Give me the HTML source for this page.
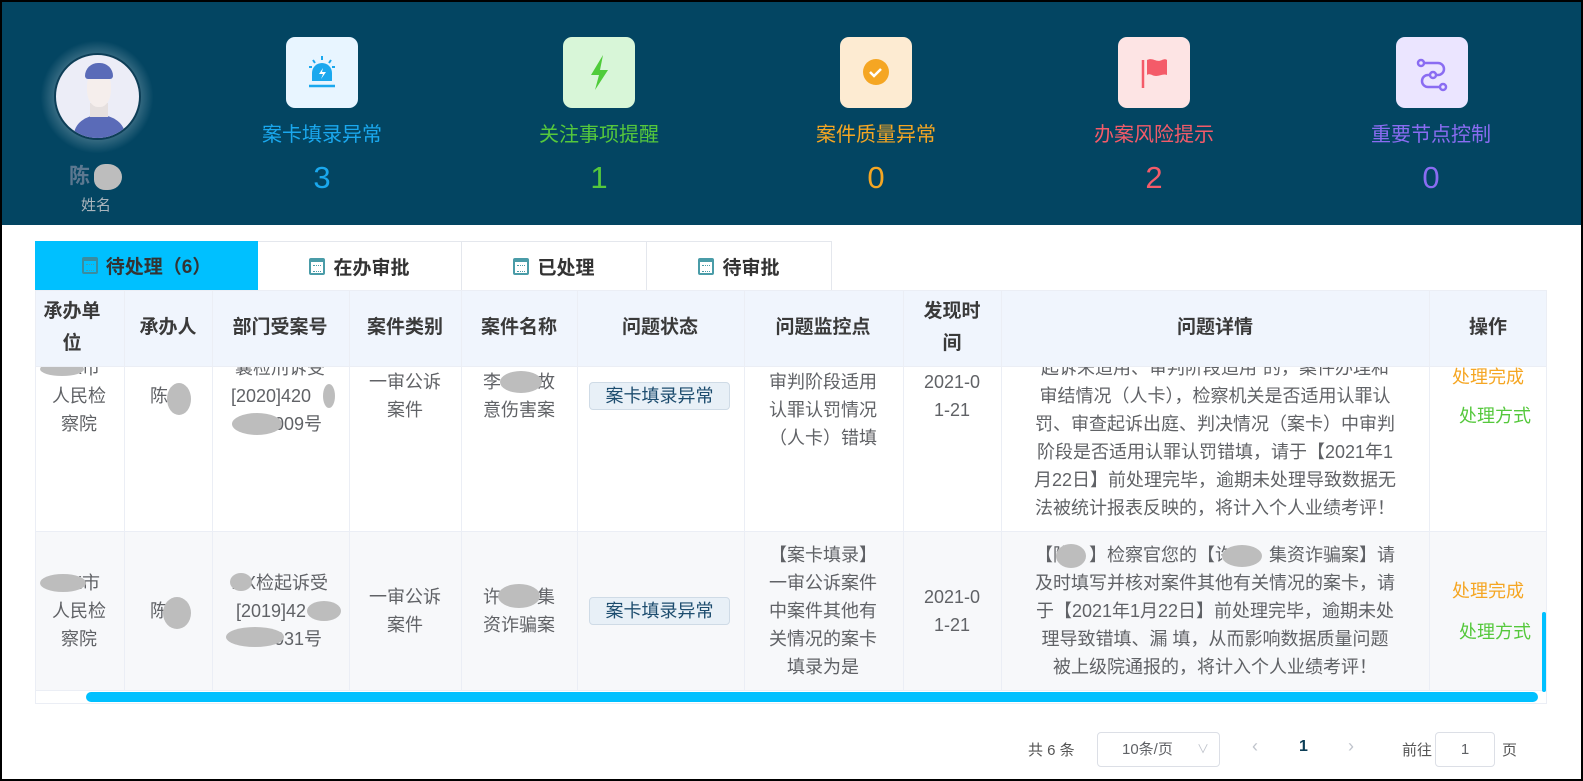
<!DOCTYPE html>
<html><head><meta charset="utf-8">
<style>
*{margin:0;padding:0;box-sizing:border-box}
html,body{width:1583px;height:781px;overflow:hidden}
body{background:#fff;font-family:"Liberation Sans","Noto Sans CJK SC",sans-serif;position:relative}
.frame{position:absolute;left:0;top:0;width:1583px;height:781px;border:2px solid #000;z-index:50;pointer-events:none}
.hdr{position:absolute;left:0;top:0;width:1583px;height:225px;background:#034562}
.ibox{position:absolute;top:37px;width:72px;height:71px;border-radius:9px}
.lab{position:absolute;top:121px;font-size:20px;line-height:28px;transform:translateX(-50%);white-space:nowrap}
.num{position:absolute;top:158px;font-size:31px;line-height:40px;transform:translateX(-50%)}
.t{position:absolute;transform:translateX(-50%);white-space:nowrap;font-size:18px;line-height:28px;color:#606266}
.h{position:absolute;transform:translateX(-50%);white-space:nowrap;font-size:19px;line-height:32px;color:#3a3a3a;font-weight:bold;text-align:center}
.vl{position:absolute;width:1px;background:#ebeef5}
.blob{position:absolute;background:#bdbdbd;border-radius:50%}
.tab{position:absolute;top:241px;height:49px;font-size:19px;font-weight:bold;color:#333;display:flex;align-items:center;justify-content:center;gap:8px;border-right:1px solid #e4e7ed;border-top:1px solid #e4e7ed}
.cal{width:16px;height:17px;border:2px solid #4a9ca8;border-top-width:4px;border-radius:2px;position:relative}
.cal:after{content:"";position:absolute;left:2px;top:3px;width:8px;height:5px;border-top:1px dotted #4a9ca8;border-bottom:1px dotted #4a9ca8}
</style></head><body>
<div class="frame"></div>
<div class="hdr">
  <div style="position:absolute;left:40px;top:40px;width:114px;height:114px;border-radius:50%;background:radial-gradient(circle,rgba(255,255,255,.35) 40%,rgba(255,255,255,0) 70%)"></div>
  <div style="position:absolute;left:54px;top:53px;width:87px;height:87px;border-radius:50%;background:#ecedf7;border:2px solid #0d3e57;overflow:hidden">
    <div style="position:absolute;left:18px;top:60px;width:51px;height:40px;border-radius:50% 50% 0 0;background:#5a6bb8"></div>
    <div style="position:absolute;left:34px;top:48px;width:18px;height:14px;background:#e6e0df"></div>
    <div style="position:absolute;left:31px;top:14px;width:24px;height:38px;border-radius:45%;background:#f5eeec"></div>
    <div style="position:absolute;left:29px;top:8px;width:28px;height:16px;border-radius:13px 13px 3px 3px;background:#5a6bb8"></div>
  </div>
  <div style="position:absolute;left:69px;top:160px;font-size:21px;font-weight:bold;color:#5c7890">陈</div>
  <div class="blob" style="left:94px;top:164px;width:28px;height:26px;border-radius:40% 50% 50% 40%"></div>
  <div style="position:absolute;left:81px;top:194px;font-size:15px;color:#a9b4bc">姓名</div>

  <div class="ibox" style="left:286px;background:#e8f5ff">
    <svg width="72" height="71" viewBox="0 0 72 71"><path d="M26 44v-8a10 10 0 0 1 20 0v8z" fill="#1aa8ee"/><path d="M37 31l-4 6h4l-2 5 5-7h-4z" fill="#fff"/><path d="M23 49h26" stroke="#1aa8ee" stroke-width="2.5"/><path d="M36 19v4M27 23l2 3M45 23l-2 3M23 30h3M46 30h3" stroke="#1aa8ee" stroke-width="2"/></svg></div>
  <div class="ibox" style="left:563px;background:#d8f6d8">
    <svg width="72" height="71" viewBox="0 0 72 71"><path d="M40 18l-12 20h8l-4 15 13-20h-8z" fill="#4fcc3a"/></svg></div>
  <div class="ibox" style="left:840px;background:#fdebd2">
    <svg width="72" height="71" viewBox="0 0 72 71"><circle cx="36" cy="35" r="13" fill="#f5a623"/><path d="M30 35l4 4 7-7" stroke="#fff" stroke-width="2.5" fill="none"/></svg></div>
  <div class="ibox" style="left:1118px;background:#fde4e4">
    <svg width="72" height="71" viewBox="0 0 72 71"><path d="M25 23v28" stroke="#f45b69" stroke-width="2.5"/><path d="M29 23c6-3 9 3 15 0 2-1 4-1 5 0v15c-5-2-9 3-15 0-2-1-4-1-5 0z" fill="#f45b69"/></svg></div>
  <div class="ibox" style="left:1396px;background:#ebe5ff">
    <svg width="72" height="71" viewBox="0 0 72 71"><g stroke="#8a6cf2" stroke-width="2.5" fill="none"><path d="M28 26h14a6 6 0 0 1 0 12H32a6 6 0 0 0 0 12h12"/><circle cx="25" cy="26" r="3" fill="#ebe5ff"/><circle cx="37" cy="38" r="3" fill="#ebe5ff"/><circle cx="47" cy="50" r="3" fill="#ebe5ff"/></g></svg></div>

  <div class="lab" style="left:322px;color:#1aa8ee">案卡填录异常</div><div class="num" style="left:322px;color:#1aa8ee">3</div>
  <div class="lab" style="left:599px;color:#55c83c">关注事项提醒</div><div class="num" style="left:599px;color:#55c83c">1</div>
  <div class="lab" style="left:876px;color:#f5a623">案件质量异常</div><div class="num" style="left:876px;color:#f5a623">0</div>
  <div class="lab" style="left:1154px;color:#f45b69">办案风险提示</div><div class="num" style="left:1154px;color:#f45b69">2</div>
  <div class="lab" style="left:1431px;color:#8a6cf2">重要节点控制</div><div class="num" style="left:1431px;color:#8a6cf2">0</div>
</div>

<div class="tab" style="left:35px;width:223px;background:#00c0ff;border:none"><span class="cal" style="border-color:#3a8ca0"></span>待处理（6）</div>
<div class="tab" style="left:258px;width:204px"><span class="cal"></span>在办审批</div>
<div class="tab" style="left:462px;width:185px"><span class="cal"></span>已处理</div>
<div class="tab" style="left:647px;width:185px"><span class="cal"></span>待审批</div>

<div style="position:absolute;left:35px;top:290px;width:1512px;height:414px;border:1px solid #ebeef5;overflow:hidden">
  <div style="position:absolute;left:0;top:0;width:1510px;height:76px;background:#f0f5fd;z-index:2;border-bottom:1px solid #ebeef5"></div>
  <div style="position:absolute;left:0;top:240px;width:1510px;height:160px;background:#f7f8fa;border-top:1px solid #ebeef5;border-bottom:1px solid #ebeef5"></div>
</div>
<div class="vl" style="left:124px;top:290px;height:400px"></div>
<div class="vl" style="left:212px;top:290px;height:400px"></div>
<div class="vl" style="left:349px;top:290px;height:400px"></div>
<div class="vl" style="left:461px;top:290px;height:400px"></div>
<div class="vl" style="left:577px;top:290px;height:400px"></div>
<div class="vl" style="left:744px;top:290px;height:400px"></div>
<div class="vl" style="left:903px;top:290px;height:400px"></div>
<div class="vl" style="left:1001px;top:290px;height:400px"></div>
<div class="vl" style="left:1429px;top:290px;height:400px"></div>

<div style="position:absolute;left:0;top:366px;width:1583px;height:325px;overflow:hidden">
 <div style="position:absolute;left:0;top:-366px;width:1583px;height:700px">
  <div class="t" style="left:79px;top:354px">XX市</div>
  <div class="t" style="left:79px;top:382px">人民检</div>
  <div class="t" style="left:79px;top:410px">察院</div>
  <div class="t" style="left:168px;top:382px">陈　</div>
  <div class="t" style="left:280px;top:354px">襄检刑诉受</div>
  <div class="t" style="left:280px;top:382px">[2020]420　</div>
  <div class="t" style="left:280px;top:410px">　　009号</div>
  <div class="t" style="left:405px;top:368px">一审公诉</div>
  <div class="t" style="left:405px;top:396px">案件</div>
  <div class="t" style="left:519px;top:368px">李　　故</div>
  <div class="t" style="left:519px;top:396px">意伤害案</div>
  <div class="t" style="left:823px;top:340px">一审公诉案件</div>
  <div class="t" style="left:823px;top:368px">审判阶段适用</div>
  <div class="t" style="left:823px;top:396px">认罪认罚情况</div>
  <div class="t" style="left:823px;top:424px">（人卡）错填</div>
  <div class="t" style="left:952px;top:368px">2021-0</div>
  <div class="t" style="left:952px;top:396px">1-21</div>
  <div class="t" style="left:1215px;top:354px">起诉未适用、审判阶段适用”的，案件办理和</div>
  <div class="t" style="left:1215px;top:382px">审结情况（人卡），检察机关是否适用认罪认</div>
  <div class="t" style="left:1215px;top:410px">罚、审查起诉出庭、判决情况（案卡）中审判</div>
  <div class="t" style="left:1215px;top:438px">阶段是否适用认罪认罚错填，请于【2021年1</div>
  <div class="t" style="left:1215px;top:466px">月22日】前处理完毕，逾期未处理导致数据无</div>
  <div class="t" style="left:1215px;top:494px">法被统计报表反映的，将计入个人业绩考评！</div>
  <div class="t" style="left:1488px;top:363px;color:#f5a623">处理完成</div>
  <div class="t" style="left:1495px;top:402px;color:#55c83c">处理方式</div>
  <div style="position:absolute;left:589px;top:382px;width:141px;height:28px;border:1px solid #cfdbe6;background:#e8f0f7;border-radius:4px;font-size:18px;line-height:26px;text-align:center;color:#1c4c6e">案卡填录异常</div>
  <div class="t" style="left:79px;top:569px">XX市</div>
  <div class="t" style="left:79px;top:597px">人民检</div>
  <div class="t" style="left:79px;top:625px">察院</div>
  <div class="t" style="left:168px;top:597px">陈　</div>
  <div class="t" style="left:280px;top:569px">XX检起诉受</div>
  <div class="t" style="left:280px;top:597px">[2019]42　</div>
  <div class="t" style="left:280px;top:625px">　　031号</div>
  <div class="t" style="left:405px;top:583px">一审公诉</div>
  <div class="t" style="left:405px;top:611px">案件</div>
  <div class="t" style="left:519px;top:583px">许　　集</div>
  <div class="t" style="left:519px;top:611px">资诈骗案</div>
  <div class="t" style="left:823px;top:541px">【案卡填录】</div>
  <div class="t" style="left:823px;top:569px">一审公诉案件</div>
  <div class="t" style="left:823px;top:597px">中案件其他有</div>
  <div class="t" style="left:823px;top:625px">关情况的案卡</div>
  <div class="t" style="left:823px;top:653px">填录为是</div>
  <div class="t" style="left:952px;top:583px">2021-0</div>
  <div class="t" style="left:952px;top:611px">1-21</div>
  <div class="t" style="left:1215px;top:541px">【陈　】检察官您的【许　　集资诈骗案】请</div>
  <div class="t" style="left:1215px;top:569px">及时填写并核对案件其他有关情况的案卡，请</div>
  <div class="t" style="left:1215px;top:597px">于【2021年1月22日】前处理完毕，逾期未处</div>
  <div class="t" style="left:1215px;top:625px">理导致错填、漏 填，从而影响数据质量问题</div>
  <div class="t" style="left:1215px;top:653px">被上级院通报的，将计入个人业绩考评！</div>
  <div class="t" style="left:1488px;top:577px;color:#f5a623">处理完成</div>
  <div class="t" style="left:1495px;top:618px;color:#55c83c">处理方式</div>
  <div style="position:absolute;left:589px;top:597px;width:141px;height:28px;border:1px solid #cfdbe6;background:#e8f0f7;border-radius:4px;font-size:18px;line-height:26px;text-align:center;color:#1c4c6e">案卡填录异常</div>
  <div class="blob" style="left:40px;top:362px;width:44px;height:14px"></div>
  <div class="blob" style="left:167px;top:383px;width:24px;height:32px"></div>
  <div class="blob" style="left:323px;top:384px;width:12px;height:24px"></div>
  <div class="blob" style="left:232px;top:413px;width:50px;height:22px"></div>
  <div class="blob" style="left:500px;top:371px;width:42px;height:22px"></div>
  <div class="blob" style="left:40px;top:574px;width:46px;height:18px"></div>
  <div class="blob" style="left:163px;top:597px;width:28px;height:32px"></div>
  <div class="blob" style="left:230px;top:573px;width:22px;height:18px"></div>
  <div class="blob" style="left:307px;top:601px;width:34px;height:20px"></div>
  <div class="blob" style="left:226px;top:627px;width:58px;height:20px"></div>
  <div class="blob" style="left:498px;top:584px;width:42px;height:24px"></div>
  <div class="blob" style="left:1056px;top:544px;width:30px;height:24px"></div>
  <div class="blob" style="left:1222px;top:545px;width:40px;height:22px"></div>
 </div>
</div>

<div style="position:absolute;left:0;top:290px;width:1583px;height:76px;z-index:3">
  <div class="h" style="left:72px;top:6px">承办单<br>位</div>
  <div class="h" style="left:168px;top:22px">承办人</div>
  <div class="h" style="left:280px;top:22px">部门受案号</div>
  <div class="h" style="left:405px;top:22px">案件类别</div>
  <div class="h" style="left:519px;top:22px">案件名称</div>
  <div class="h" style="left:660px;top:22px">问题状态</div>
  <div class="h" style="left:823px;top:22px">问题监控点</div>
  <div class="h" style="left:952px;top:6px">发现时<br>间</div>
  <div class="h" style="left:1215px;top:22px">问题详情</div>
  <div class="h" style="left:1488px;top:22px">操作</div>
</div>
<div class="vl" style="left:124px;top:290px;height:76px;z-index:4"></div>
<div class="vl" style="left:212px;top:290px;height:76px;z-index:4"></div>
<div class="vl" style="left:349px;top:290px;height:76px;z-index:4"></div>
<div class="vl" style="left:461px;top:290px;height:76px;z-index:4"></div>
<div class="vl" style="left:577px;top:290px;height:76px;z-index:4"></div>
<div class="vl" style="left:744px;top:290px;height:76px;z-index:4"></div>
<div class="vl" style="left:903px;top:290px;height:76px;z-index:4"></div>
<div class="vl" style="left:1001px;top:290px;height:76px;z-index:4"></div>
<div class="vl" style="left:1429px;top:290px;height:76px;z-index:4"></div>

<div style="position:absolute;left:86px;top:692px;width:1452px;height:10px;border-radius:5px;background:#00c0ff"></div>
<div style="position:absolute;left:1542px;top:612px;width:4px;height:80px;border-radius:2px;background:#00c0ff"></div>

<div style="position:absolute;left:1028px;top:739px;font-size:15px;color:#555">共 6 条</div>
<div style="position:absolute;left:1097px;top:732px;width:123px;height:35px;border:1px solid #dcdfe6;border-radius:4px;font-size:15px;color:#606266;line-height:33px;padding-left:24px">10条/页<span style="position:absolute;right:10px;top:0;color:#c0c4cc;font-size:12px">∨</span></div>
<div style="position:absolute;left:1252px;top:736px;font-size:18px;color:#c0c4cc">‹</div>
<div style="position:absolute;left:1299px;top:738px;font-size:16px;font-weight:bold;color:#0d3e57">1</div>
<div style="position:absolute;left:1348px;top:736px;font-size:18px;color:#c0c4cc">›</div>
<div style="position:absolute;left:1402px;top:739px;font-size:15px;color:#555">前往</div>
<div style="position:absolute;left:1435px;top:732px;width:60px;height:35px;border:1px solid #dcdfe6;border-radius:4px;font-size:15px;color:#606266;line-height:33px;text-align:center">1</div>
<div style="position:absolute;left:1502px;top:739px;font-size:15px;color:#555">页</div>
</body></html>
